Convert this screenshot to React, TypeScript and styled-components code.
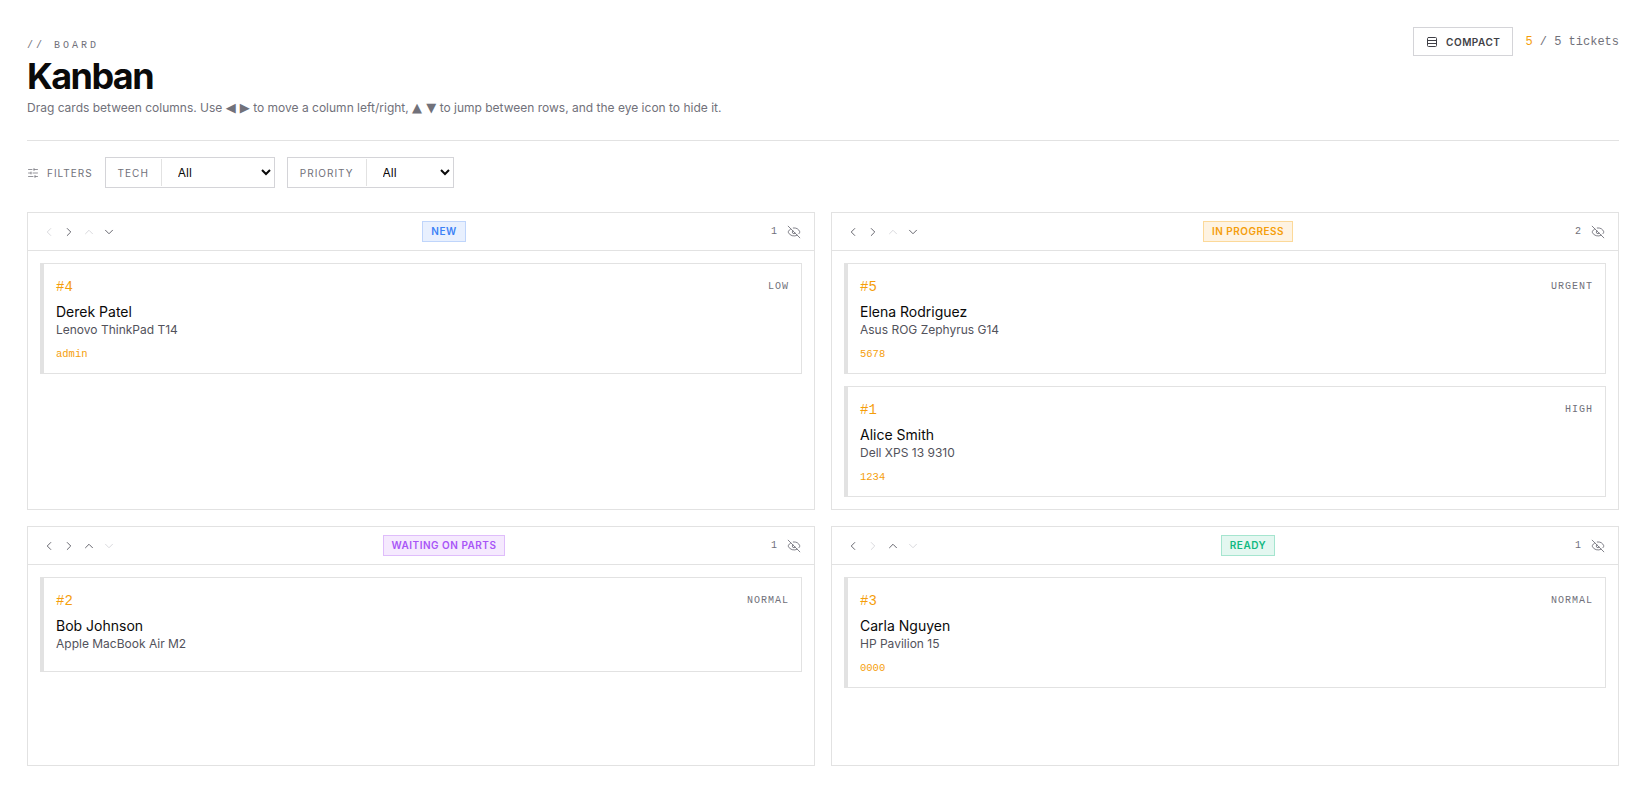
import React from "react";
import styled, { createGlobalStyle } from "styled-components";
import {
  ChevronDown,
  ChevronLeft,
  ChevronRight,
  ChevronUp,
  EyeOff,
  Rows3,
  SlidersHorizontal,
} from "lucide-react";

const mono = `"Liberation Mono", "DejaVu Sans Mono", monospace`;
const border = "#e2e2e2";
const amber = "#f59e0b";

const GlobalStyle = createGlobalStyle`
  * { box-sizing: border-box; }
  body {
    margin: 0;
    background: #fff;
    font-family: Inter, "Liberation Sans", sans-serif;
    color: #0a0a0a;
  }
`;

const Page = styled.div`
  padding: 27px 20px 39px 27px;
`;

const Header = styled.header`
  display: flex;
  justify-content: space-between;
  align-items: flex-start;
  padding-bottom: 23px;
  border-bottom: 1px solid ${border};
`;

const HeaderLeft = styled.div`
  padding-top: 9px;
`;

const Eyebrow = styled.div`
  font-family: ${mono};
  font-size: 10px;
  line-height: 14px;
  letter-spacing: 3px;
  color: #71717a;
  margin-top: 3px;
`;

const Title = styled.h1`
  margin: 3px 0 0;
  font-size: 36px;
  line-height: 40px;
  font-weight: 700;
  letter-spacing: -1.6px;
`;

const Subtitle = styled.p`
  margin: 3px 0 0;
  font-size: 12px;
  line-height: 18px;
  color: #71717a;
`;

const Triangle = styled.span`
  font-family: "DejaVu Sans", sans-serif;
  font-size: 13px;
  line-height: 1;
`;

const HeaderRight = styled.div`
  display: flex;
  align-items: center;
  gap: 12px;
`;

const CompactButton = styled.button`
  display: flex;
  align-items: center;
  gap: 8px;
  height: 29px;
  padding: 0 12px;
  background: #fff;
  border: 1px solid #d4d4d8;
  font-family: Inter, sans-serif;
  font-size: 10px;
  font-weight: 600;
  letter-spacing: 0.5px;
  color: #3f3f46;
`;

const Count = styled.div`
  font-family: ${mono};
  font-size: 12px;
  color: #71717a;
`;

const CountValue = styled.span`
  color: ${amber};
`;

const FilterBar = styled.div`
  display: flex;
  align-items: center;
  gap: 12px;
  padding: 16px 0 24px;
`;

const FilterLabel = styled.div`
  display: flex;
  align-items: center;
  gap: 8px;
  font-size: 10px;
  letter-spacing: 1px;
  color: #71717a;
`;

const FilterGroup = styled.label`
  display: flex;
  align-items: stretch;
  height: 31px;
  border: 1px solid #d4d4d8;
`;

const FilterName = styled.span`
  display: flex;
  align-items: center;
  margin: 1px 0;
  padding: 0 12px;
  font-size: 10px;
  letter-spacing: 1px;
  color: #71717a;
  border-right: 1px solid ${border};
`;

const Select = styled.select<{ $width: number }>`
  width: ${(p) => p.$width}px;
  border: none;
  background: #fff;
  padding: 0 8px 0 12px;
  font-family: Inter, sans-serif;
  font-size: 12px;
  color: #0a0a0a;
  outline: none;
`;

const Board = styled.div`
  display: grid;
  grid-template-columns: 1fr 1fr;
  gap: 16px;
`;

const Column = styled.section`
  display: flex;
  flex-direction: column;
  min-height: 240px;
  border: 1px solid ${border};
`;

const ColumnHeader = styled.div`
  display: flex;
  justify-content: space-between;
  align-items: center;
  height: 38px;
  padding: 0 13px;
  border-bottom: 1px solid ${border};
`;

const Arrows = styled.div`
  display: flex;
  gap: 4px;
`;

const ArrowButton = styled.button<{ $disabled?: boolean }>`
  display: flex;
  align-items: center;
  justify-content: center;
  width: 16px;
  height: 16px;
  padding: 0;
  border: none;
  background: none;
  color: ${(p) => (p.$disabled ? "#d4d4d8" : "#52525b")};
`;

const Badge = styled.span<{ $fg: string; $bg: string; $line: string }>`
  padding: 3px 8px;
  font-size: 10px;
  line-height: 13px;
  font-weight: 600;
  letter-spacing: 0.5px;
  color: ${(p) => p.$fg};
  background: ${(p) => p.$bg};
  border: 1px solid ${(p) => p.$line};
`;

const ColumnMeta = styled.div`
  display: flex;
  justify-content: flex-end;
  align-items: center;
  gap: 10px;
  font-family: ${mono};
  font-size: 10px;
  color: #71717a;
`;

const CardList = styled.div`
  display: flex;
  flex-direction: column;
  gap: 12px;
  padding: 12px;
`;

const Card = styled.article`
  padding: 14px 12px 11px;
  border: 1px solid ${border};
  border-left: 4px solid ${border};
`;

const CardTop = styled.div`
  display: flex;
  justify-content: space-between;
  align-items: flex-start;
`;

const CardId = styled.span`
  font-family: ${mono};
  font-size: 14px;
  line-height: 18px;
  color: ${amber};
`;

const CardPriority = styled.span`
  font-family: ${mono};
  font-size: 10px;
  line-height: 18px;
  letter-spacing: 1px;
  color: #71717a;
`;

const CardName = styled.div`
  margin-top: 6px;
  font-size: 14px;
  line-height: 20px;
  color: #0a0a0a;
`;

const CardDevice = styled.div`
  font-size: 12px;
  line-height: 16px;
  color: #52525b;
`;

const CardPin = styled.div`
  margin-top: 8px;
  font-family: ${mono};
  font-size: 10.5px;
  line-height: 16px;
  color: ${amber};
`;

interface Ticket {
  id: number;
  priority: string;
  name: string;
  device: string;
  pin?: string;
}

interface ColumnData {
  label: string;
  fg: string;
  bg: string;
  line: string;
  disabled: [boolean, boolean, boolean, boolean];
  tickets: Ticket[];
}

const columns: ColumnData[] = [
  {
    label: "NEW",
    fg: "#3b82f6",
    bg: "#e8f0fe",
    line: "#bfd5fb",
    disabled: [true, false, true, false],
    tickets: [
      { id: 4, priority: "LOW", name: "Derek Patel", device: "Lenovo ThinkPad T14", pin: "admin" },
    ],
  },
  {
    label: "IN PROGRESS",
    fg: amber,
    bg: "#fef3e2",
    line: "#fcd999",
    disabled: [false, false, true, false],
    tickets: [
      { id: 5, priority: "URGENT", name: "Elena Rodriguez", device: "Asus ROG Zephyrus G14", pin: "5678" },
      { id: 1, priority: "HIGH", name: "Alice Smith", device: "Dell XPS 13 9310", pin: "1234" },
    ],
  },
  {
    label: "WAITING ON PARTS",
    fg: "#a855f7",
    bg: "#f5e9fe",
    line: "#dfbdfb",
    disabled: [false, false, false, true],
    tickets: [
      { id: 2, priority: "NORMAL", name: "Bob Johnson", device: "Apple MacBook Air M2" },
    ],
  },
  {
    label: "READY",
    fg: "#10b981",
    bg: "#e3f7f0",
    line: "#a5e5cf",
    disabled: [false, true, false, true],
    tickets: [
      { id: 3, priority: "NORMAL", name: "Carla Nguyen", device: "HP Pavilion 15", pin: "0000" },
    ],
  },
];

const arrowIcons = [ChevronLeft, ChevronRight, ChevronUp, ChevronDown];

const App: React.FC = () => {
  return (
    <Page>
      <GlobalStyle />
      <Header>
        <HeaderLeft>
          <Eyebrow>// BOARD</Eyebrow>
          <Title>Kanban</Title>
          <Subtitle>
            Drag cards between columns. Use <Triangle>◀ ▶</Triangle> to move a column left/right,{" "}
            <Triangle>▲ ▼</Triangle> to jump between rows, and the eye icon to hide it.
          </Subtitle>
        </HeaderLeft>
        <HeaderRight>
          <CompactButton>
            <Rows3 size={12} />
            COMPACT
          </CompactButton>
          <Count>
            <CountValue>5</CountValue> / 5 tickets
          </Count>
        </HeaderRight>
      </Header>

      <FilterBar>
        <FilterLabel>
          <SlidersHorizontal size={12} strokeWidth={1.5} />
          FILTERS
        </FilterLabel>
        <FilterGroup>
          <FilterName>TECH</FilterName>
          <Select $width={112} defaultValue="All">
            <option>All</option>
          </Select>
        </FilterGroup>
        <FilterGroup>
          <FilterName>PRIORITY</FilterName>
          <Select $width={86} defaultValue="All">
            <option>All</option>
          </Select>
        </FilterGroup>
      </FilterBar>

      <Board>
        {columns.map((column) => (
          <Column key={column.label}>
            <ColumnHeader>
              <Arrows>
                {arrowIcons.map((Icon, i) => (
                  <ArrowButton key={i} $disabled={column.disabled[i]}>
                    <Icon size={14} strokeWidth={1.5} />
                  </ArrowButton>
                ))}
              </Arrows>
              <Badge $fg={column.fg} $bg={column.bg} $line={column.line}>
                {column.label}
              </Badge>
              <ColumnMeta>
                {column.tickets.length}
                <EyeOff size={14} strokeWidth={1.5} color="#71717a" />
              </ColumnMeta>
            </ColumnHeader>
            <CardList>
              {column.tickets.map((ticket) => (
                <Card key={ticket.id}>
                  <CardTop>
                    <CardId>#{ticket.id}</CardId>
                    <CardPriority>{ticket.priority}</CardPriority>
                  </CardTop>
                  <CardName>{ticket.name}</CardName>
                  <CardDevice>{ticket.device}</CardDevice>
                  <CardPin>{ticket.pin}</CardPin>
                </Card>
              ))}
            </CardList>
          </Column>
        ))}
      </Board>
    </Page>
  );
};

export default App;
